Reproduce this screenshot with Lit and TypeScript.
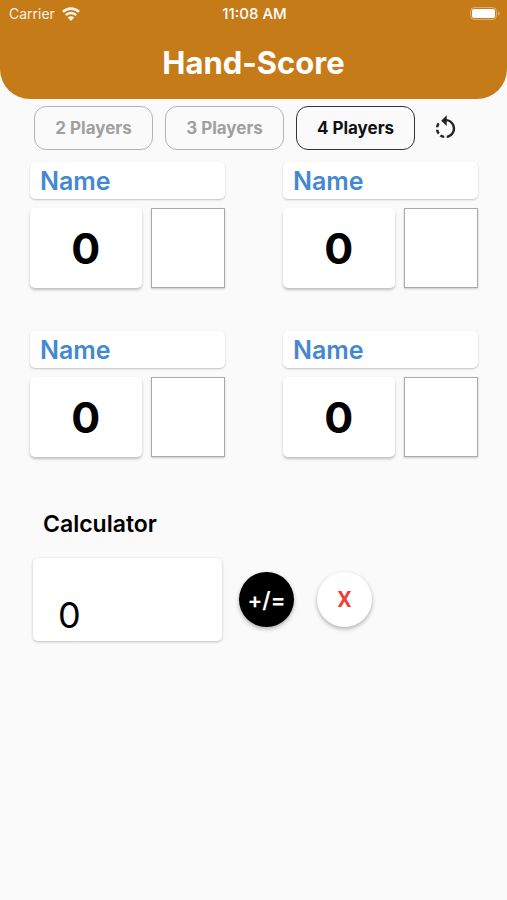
import { LitElement, html, css, svg } from "lit";
import { customElement, property, state } from "lit/decorators.js";
import { classMap } from "lit/directives/class-map.js";

const wifiIcon = html`<svg class="wifi" viewBox="0 0 18 14" aria-hidden="true">
  ${svg`<g fill="none" stroke="currentColor" stroke-width="2.6"><path d="M0.9 4.900a11.600 11.600 0 0 1 16.200 0"/><path d="M3.800 8.200a7.400 7.400 0 0 1 10.400 0"/></g><path fill="currentColor" d="M9 14l3.300-3.400a4.600 4.600 0 0 0-6.600 0z"/>`}
</svg>`;

const batteryIcon = html`<svg class="battery" viewBox="0 0 30 14" aria-hidden="true">
  ${svg`<rect x="0.5" y="0.5" width="26" height="12" rx="4" fill="none" stroke="#fff" stroke-opacity=".4"/><rect x="2" y="2" width="23" height="9" rx="2" fill="#fff"/><path d="M28 4.500c1.400.5 1.900 1.300 1.900 2s-.5 1.500-1.900 2z" fill="#fff" fill-opacity=".4"/>`}
</svg>`;

const rotateLeftIcon = html`<svg class="rotate" viewBox="0 0 24 24" aria-hidden="true">
  ${svg`<path fill="currentColor" d="M7.110 8.530L5.700 7.110C4.800 8.270 4.240 9.610 4.070 11h2.020c.14-.87.49-1.720 1.020-2.470zM6.090 13H4.070c.17 1.390.72 2.730 1.620 3.890l1.410-1.420c-.52-.75-.87-1.590-1.010-2.470zm1.010 5.320c1.160.9 2.510 1.440 3.900 1.610V17.900c-.87-.15-1.710-.49-2.460-1.030L7.100 18.320zM13 4.070V1L8.450 5.550 13 10V6.090c2.840.48 5 2.940 5 5.910s-2.160 5.430-5 5.910v2.020c3.950-.49 7-3.850 7-7.930s-3.050-7.440-7-7.930z"/>`}
</svg>`;

@customElement("player-card")
export class PlayerCard extends LitElement {
  @property({ type: Number }) score = 0;

  static styles = css`
    :host { display: grid; gap: 9px; }
    input {
      box-sizing: border-box;
      width: 100%;
      min-width: 0;
      margin: 0;
      font: inherit;
      outline: none;
    }
    .name {
      height: 37px;
      padding: 0 10px;
      border: 0;
      border-radius: 5px;
      background: #fff;
      box-shadow: 0 1px 2px rgba(0, 0, 0, 0.22);
      color: #4489d0;
      font-size: 25px;
      font-weight: 600;
    }
    .name::placeholder { color: #4489d0; opacity: 1; }
    .row { display: grid; grid-template-columns: 3fr 2fr; gap: 9px; height: 80px; }
    .score {
      display: grid;
      place-items: center;
      border-radius: 5px;
      background: #fff;
      box-shadow: 0 2px 3px rgba(0, 0, 0, 0.24);
      color: #000;
      font-size: 43px;
      font-weight: 700;
      line-height: 48px;
    }
    .entry {
      height: 100%;
      border: 1px solid #aaa;
      border-radius: 0;
      background: #fff;
      box-shadow: 0 1px 2px rgba(0, 0, 0, 0.2);
      text-align: center;
      font-size: 25px;
    }
  `;

  render() {
    return html`
      <input class="name" type="text" placeholder="Name" aria-label="Player name" />
      <div class="row">
        <output class="score">${this.score}</output>
        <input class="entry" type="text" inputmode="numeric" aria-label="Hand score" />
      </div>
    `;
  }
}

@customElement("app-root")
export class AppRoot extends LitElement {
  @state() private players = 4;

  static styles = css`
    :host {
      display: block;
      min-height: 100vh;
      background: #fafafa;
      color: #000;
      font-family: Inter, "Liberation Sans", sans-serif;
    }
    header {
      padding-bottom: 18px;
      border-radius: 0 0 30px 30px;
      background: #c57b18;
      color: #fff;
    }
    .status {
      display: grid;
      grid-template-columns: 1fr auto 1fr;
      align-items: center;
      height: 27px;
      padding: 0 7px 0 9px;
      font-size: 14px;
    }
    .carrier { display: flex; align-items: center; gap: 7px; opacity: 0.9; }
    .time { font-size: 15px; font-weight: 500; }
    .wifi { width: 18px; height: 14px; }
    .battery { width: 30px; height: 14px; justify-self: end; }
    h1 {
      margin: 0;
      padding-top: 18px;
      font-size: 31px;
      font-weight: 700;
      line-height: 36px;
      text-align: center;
    }
    button { margin: 0; padding: 0; font: inherit; cursor: pointer; }
    nav {
      display: flex;
      align-items: center;
      gap: 12px;
      padding: 7px 30px 0 34px;
    }
    .mode {
      flex: 0 1 119px;
      height: 44px;
      border: 1px solid #b4b4b4;
      border-radius: 12px;
      background: transparent;
      color: #a0a0a0;
      font-size: 17px;
      font-weight: 700;
    }
    .mode.active { border-color: #333; color: #111; }
    .reset {
      display: grid;
      place-items: center;
      width: 36px;
      height: 44px;
      border: 0;
      background: none;
      color: #222;
    }
    .rotate { width: 29px; height: 29px; }
    .players {
      display: grid;
      grid-template-columns: 1fr 1fr;
      gap: 43px 58px;
      padding: 12px 29px 0 30px;
    }
    .calculator { padding: 53px 32px 0 33px; }
    h2 {
      margin: 0;
      padding-left: 10px;
      font-size: 23px;
      font-weight: 600;
      line-height: 28px;
    }
    .keys { display: flex; align-items: center; padding-top: 20px; }
    .display {
      box-sizing: border-box;
      flex: 0 1 189px;
      min-width: 0;
      height: 83px;
      padding: 30px 25px 0;
      border: 0;
      border-radius: 5px;
      outline: none;
      background: #fff;
      box-shadow: 0 1px 3px rgba(0, 0, 0, 0.24);
      color: #000;
      font: inherit;
      font-size: 36px;
    }
    .round {
      flex: none;
      width: 55px;
      height: 55px;
      border: 0;
      border-radius: 50%;
      box-shadow: 0 2px 4px rgba(0, 0, 0, 0.3);
      font-size: 22px;
      font-weight: 600;
    }
    .add { margin-left: 17px; background: #000; color: #fff; }
    .clear {
      margin-left: 23px;
      background: #fff;
      color: #ee4035;
      font-family: Roboto, Inter, sans-serif;
    }
  `;

  render() {
    return html`
      <header>
        <div class="status">
          <span class="carrier">Carrier ${wifiIcon}</span>
          <span class="time">11:08 AM</span>
          ${batteryIcon}
        </div>
        <h1>Hand-Score</h1>
      </header>
      <nav aria-label="Number of players">
        ${[2, 3, 4].map(
          (n) => html`<button
            type="button"
            class=${classMap({ mode: true, active: n === this.players })}
            aria-pressed=${n === this.players}
            @click=${() => (this.players = n)}
          >${n} Players</button>`
        )}
        <button type="button" class="reset" aria-label="Reset scores">${rotateLeftIcon}</button>
      </nav>
      <main>
        <section class="players">
          ${Array.from({ length: this.players }, () => html`<player-card></player-card>`)}
        </section>
        <section class="calculator">
          <h2><label for="display">Calculator</label></h2>
          <div class="keys">
            <input id="display" class="display" type="text" inputmode="numeric" value="0" />
            <button type="button" class="round add">+/=</button>
            <button type="button" class="round clear">X</button>
          </div>
        </section>
      </main>
    `;
  }
}
